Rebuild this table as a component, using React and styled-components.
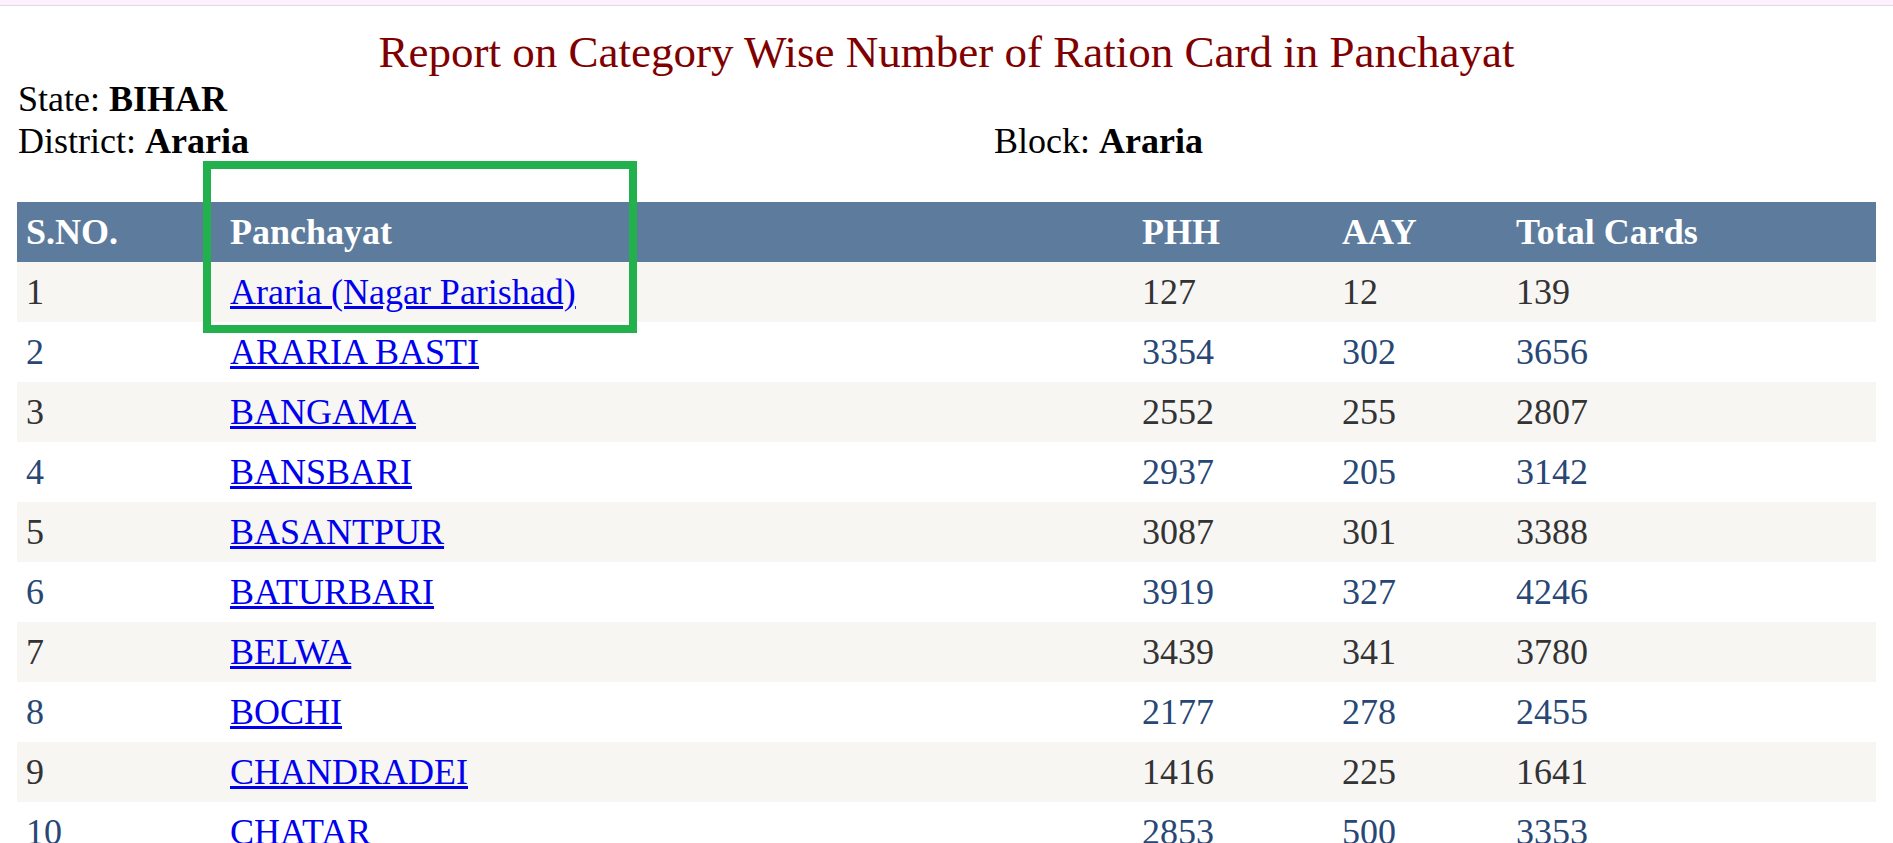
import React from 'react';
import styled, { createGlobalStyle } from 'styled-components';

const GlobalStyle = createGlobalStyle`
  html, body {
    margin: 0;
    padding: 0;
    background: #ffffff;
  }
  body {
    font-family: "Liberation Serif", "Times New Roman", serif;
    font-size: 36px;
    color: #000000;
  }
`;

const TopStrip = styled.div`
  height: 5px;
  background: #fdf1fd;
  border-bottom: 1px solid #e2dae2;
`;

const Page = styled.div`
  position: relative;
  padding: 20px 17px 40px 17px;
`;

const Title = styled.h1`
  margin: 0;
  font-size: 45px;
  font-weight: normal;
  line-height: normal;
  color: #800000;
  text-align: center;
`;

const Info = styled.div`
  display: grid;
  grid-template-columns: 976px 1fr;
  line-height: 42px;
  padding-left: 1px;

  b {
    font-weight: bold;
  }
`;

const InfoLine = styled.div`
  grid-column: ${(p) => p.col || 1};
`;

const Table = styled.table`
  width: 100%;
  margin-top: 40px;
  border-collapse: collapse;
  table-layout: fixed;
`;

const HeadRow = styled.tr`
  background: #5d7b9d;
  color: #ffffff;
  height: 60px;
`;

const Th = styled.th`
  text-align: left;
  font-weight: bold;
  padding: 0 9px;
  vertical-align: middle;
`;

const Row = styled.tr`
  height: 60px;
  background: ${(p) => (p.alt ? '#ffffff' : '#f7f6f3')};
  color: ${(p) => (p.alt ? '#284775' : '#333333')};
`;

const Td = styled.td`
  padding: 0 9px;
  vertical-align: middle;
  white-space: nowrap;
`;

const Link = styled.a`
  color: #0000ee;
  text-decoration: underline;
`;

const Highlight = styled.div`
  position: absolute;
  left: 203px;
  top: 155px;
  width: 434px;
  height: 172px;
  box-sizing: border-box;
  border: 8px solid #22b14c;
  pointer-events: none;
`;

const rows = [
  ['Araria (Nagar Parishad)', 127, 12, 139],
  ['ARARIA BASTI', 3354, 302, 3656],
  ['BANGAMA', 2552, 255, 2807],
  ['BANSBARI', 2937, 205, 3142],
  ['BASANTPUR', 3087, 301, 3388],
  ['BATURBARI', 3919, 327, 4246],
  ['BELWA', 3439, 341, 3780],
  ['BOCHI', 2177, 278, 2455],
  ['CHANDRADEI', 1416, 225, 1641],
  ['CHATAR', 2853, 500, 3353],
];

export default function App() {
  return (
    <>
      <GlobalStyle />
      <TopStrip />
      <Page>
        <Title>Report on Category Wise Number of Ration Card in Panchayat</Title>
        <Info>
          <InfoLine>State: <b>BIHAR</b></InfoLine>
          <InfoLine col={2} />
          <InfoLine>District: <b>Araria</b></InfoLine>
          <InfoLine col={2}>Block: <b>Araria</b></InfoLine>
        </Info>
        <Table>
          <colgroup>
            <col style={{ width: 204 }} />
            <col style={{ width: 912 }} />
            <col style={{ width: 200 }} />
            <col style={{ width: 174 }} />
            <col />
          </colgroup>
          <thead>
            <HeadRow>
              <Th>S.NO.</Th>
              <Th>Panchayat</Th>
              <Th>PHH</Th>
              <Th>AAY</Th>
              <Th>Total Cards</Th>
            </HeadRow>
          </thead>
          <tbody>
            {rows.map(([name, phh, aay, total], i) => (
              <Row key={name} alt={i % 2 === 1}>
                <Td>{i + 1}</Td>
                <Td>
                  <Link href="#">{name}</Link>
                </Td>
                <Td>{phh}</Td>
                <Td>{aay}</Td>
                <Td>{total}</Td>
              </Row>
            ))}
          </tbody>
        </Table>
        <Highlight />
      </Page>
    </>
  );
}
